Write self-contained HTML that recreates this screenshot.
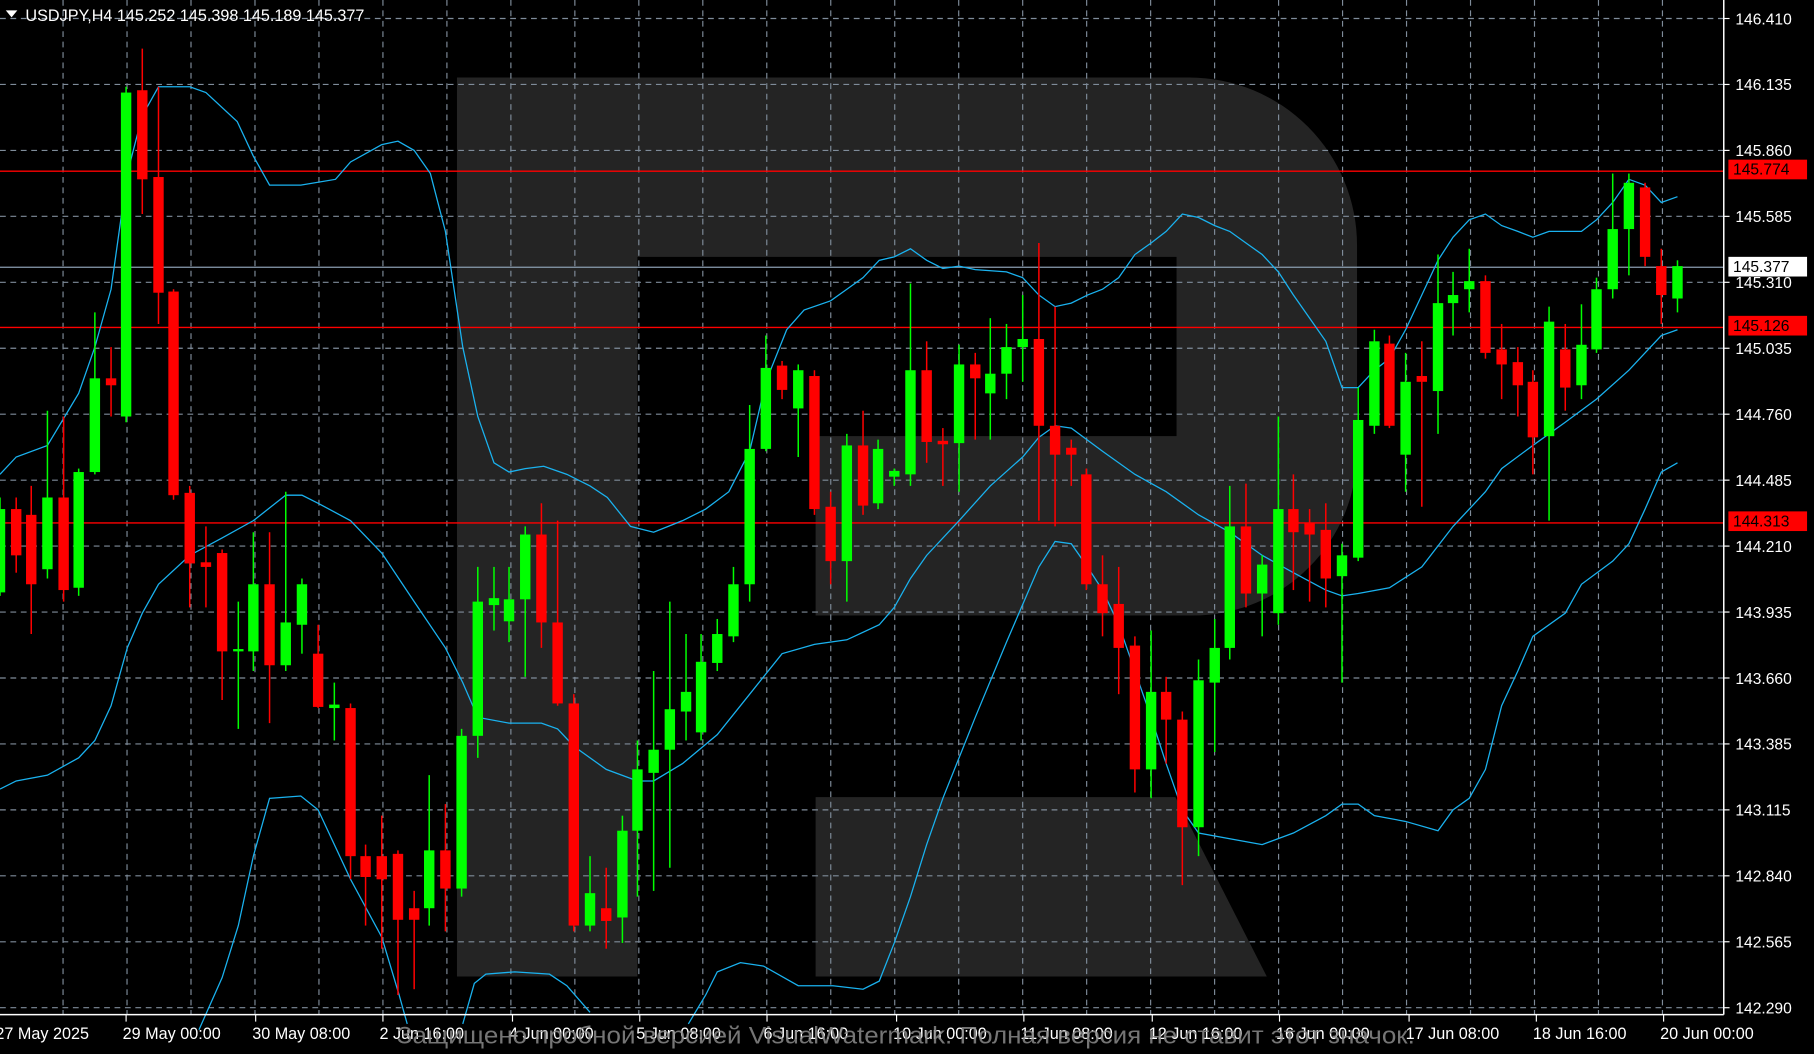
<!DOCTYPE html>
<html><head><meta charset="utf-8"><style>
html,body{margin:0;padding:0;background:#000;overflow:hidden}
svg{display:block}
text{font-family:"Liberation Sans","DejaVu Sans",sans-serif}
</style></head><body>
<svg id="s" width="1814" height="1054" viewBox="0 0 1568 911" preserveAspectRatio="none" xmlns="http://www.w3.org/2000/svg">
<rect width="1568" height="911" fill="#000"/>
<path d="M395 67 H1028 A145 145 0 0 1 1173 212 V390 A142 142 0 0 1 1031 532 H705 V377 H1017 V222 H551 V844 H395 Z" fill="#242424"/>
<path d="M705 689 H1016 L1095 844 H705 Z" fill="#242424"/>
<g id="grid" stroke="#7f8c9a" stroke-width="1" stroke-dasharray="5,4"></g>
<line x1="0" y1="148" x2="1490" y2="148" stroke="#ff0000" stroke-width="1.2"/>
<line x1="0" y1="283" x2="1490" y2="283" stroke="#ff0000" stroke-width="1.2"/>
<line x1="0" y1="452" x2="1490" y2="452" stroke="#ff0000" stroke-width="1.2"/>
<line x1="0" y1="231" x2="1490" y2="231" stroke="#8a9db0" stroke-width="1"/>
<g id="bands" fill="none" stroke="#1ab2ef" stroke-width="1.1"></g>
<g id="candles"></g>
<line x1="1490" y1="0" x2="1490" y2="877" stroke="#fff" stroke-width="1.3"/>
<line x1="0" y1="877" x2="1490" y2="877" stroke="#fff" stroke-width="1.3"/>
<g id="axis" fill="#fff" font-size="13.5"></g>
<rect x="1494" y="138" width="68" height="17" fill="#ff0000"/>
<text x="1498" y="151" font-size="13.5" fill="#000">145.774</text>
<rect x="1494" y="222" width="68" height="17" fill="#fff"/>
<text x="1498" y="235" font-size="13.5" fill="#000">145.377</text>
<rect x="1494" y="273" width="68" height="17" fill="#ff0000"/>
<text x="1498" y="286" font-size="13.5" fill="#000">145.126</text>
<rect x="1494" y="442" width="68" height="17" fill="#ff0000"/>
<text x="1498" y="455" font-size="13.5" fill="#000">144.313</text>
<path d="M5 9 L15 9 L10 15 Z" fill="#fff"/>
<text x="22" y="18" font-size="14" fill="#fff">USDJPY,H4  145.252 145.398 145.189 145.377</text>
<g id="dates" fill="#fff" font-size="14"></g>
<text x="343" y="902" font-size="21" fill="#8a8a8a" fill-opacity="0.85" textLength="880" lengthAdjust="spacingAndGlyphs">Защищено пробной версией VisualWatermark. Полная версия не ставит этот значок.</text>
</svg>
<script>
var NS="http://www.w3.org/2000/svg";
function el(p,t,a){var e=document.createElementNS(NS,t);for(var k in a)e.setAttribute(k,a[k]);document.getElementById(p).appendChild(e);return e;}
var prices=["146.410","146.135","145.860","145.585","145.310","145.035","144.760","144.485","144.210","143.935","143.660","143.385","143.115","142.840","142.565","142.290"];
for(var k=0;k<16;k++){var y=16+57*k;el("grid","line",{x1:0,y1:y,x2:1490,y2:y});el("axis","line",{x1:1490,y1:y,x2:1495,y2:y,stroke:"#fff"});var t=el("axis","text",{x:1500,y:y+5});t.textContent=prices[k];}
for(var k=0;k<27;k++){var x=54.5+55.3*k;if(x>1490)break;el("grid","line",{x1:x,y1:0,x2:x,y2:877});}
var dl=[["27 May 2025",-4],["29 May 00:00",106],["30 May 08:00",218],["2 Jun 16:00",328],["4 Jun 00:00",440],["5 Jun 08:00",550],["6 Jun 16:00",660],["10 Jun 00:00",772],["11 Jun 08:00",882],["12 Jun 16:00",993],["16 Jun 00:00",1103],["17 Jun 08:00",1215],["18 Jun 16:00",1325],["20 Jun 00:00",1435]];
dl.forEach(function(d){var t=el("dates","text",{x:d[1],y:898});t.textContent=d[0];el("dates","line",{x1:d[1]+3,y1:877,x2:d[1]+3,y2:883,stroke:"#fff"});});
var C=[[0,"g",440,512,430,515],[14,"r",440,480,430,495],[27,"r",445,505,420,548],[41,"g",430,492,355,500],[55,"r",430,510,360,520],[68,"g",408,508,405,515],[82,"g",327,408,270,410],[96,"r",327,333,300,360],[109,"g",80,360,75,365],[123,"r",78,155,42,185],[137,"r",153,253,75,280],[150,"r",252,428,250,432],[164,"r",426,487,420,525],[178,"r",486,490,455,525],[192,"r",478,563,475,605],[206,"g",561,563,520,630],[219,"g",505,563,460,580],[233,"r",505,575,460,625],[247,"g",538,575,425,580],[261,"g",505,540,500,565],[275,"r",565,611,540,612],[289,"g",609,612,590,640],[303,"r",612,740,608,760],[316,"r",740,758,730,800],[330,"r",740,760,705,820],[344,"r",738,795,735,860],[358,"r",785,795,770,855],[371,"g",735,785,670,800],[385,"r",735,768,695,805],[399,"g",636,768,630,775],[413,"g",520,636,490,655],[427,"g",517,523,490,545],[440,"g",518,537,490,555],[454,"g",462,518,455,585],[468,"r",462,538,435,560],[482,"r",538,608,450,610],[496,"r",608,800,600,805],[510,"g",772,800,740,805],[524,"r",785,796,750,820],[538,"g",718,793,705,815],[551,"g",665,718,640,775],[565,"g",648,668,580,770],[579,"g",613,648,520,750],[593,"g",598,615,548,640],[606,"g",572,633,548,640],[620,"g",548,573,535,580],[634,"g",505,550,490,555],[648,"g",388,505,350,520],[662,"g",318,388,290,390],[676,"r",316,337,312,345],[690,"g",320,353,315,395],[704,"r",325,440,320,445],[718,"r",438,485,425,505],[732,"g",385,485,375,520],[746,"r",385,437,355,445],[759,"g",388,435,380,440],[773,"g",407,412,405,420],[787,"g",320,410,245,420],[801,"r",320,382,295,400],[815,"r",381,384,370,420],[829,"g",315,383,298,425],[843,"r",315,327,305,380],[856,"g",323,340,275,380],[870,"g",300,323,280,345],[884,"g",293,300,255,330],[898,"r",293,368,210,450],[912,"r",368,393,265,455],[926,"r",387,393,380,420],[939,"r",410,505,405,510],[953,"r",505,530,480,550],[967,"r",522,560,490,600],[981,"r",558,665,550,685],[995,"g",598,665,545,690],[1008,"r",598,622,585,660],[1022,"r",622,715,615,765],[1036,"g",588,715,570,740],[1050,"g",560,590,535,650],[1063,"g",455,560,420,570],[1077,"r",455,513,418,525],[1091,"g",488,513,480,550],[1105,"g",440,530,360,540],[1118,"r",440,460,410,510],[1132,"r",452,462,440,520],[1146,"r",458,500,435,525],[1160,"g",480,498,470,590],[1174,"g",363,482,335,485],[1188,"g",295,368,285,375],[1201,"r",297,368,290,370],[1215,"g",330,393,305,425],[1229,"r",325,330,295,438],[1243,"g",262,338,220,375],[1256,"g",255,262,235,290],[1270,"g",243,250,215,270],[1284,"r",243,305,238,310],[1298,"r",302,315,280,345],[1312,"r",313,333,300,360],[1325,"r",330,378,320,410],[1339,"g",278,377,265,450],[1353,"r",302,335,280,355],[1367,"g",298,333,263,345],[1380,"g",250,302,240,305],[1394,"g",198,250,150,258],[1408,"g",158,198,150,238],[1422,"r",162,222,158,230],[1436,"r",230,255,215,280],[1450,"g",230,258,225,270]];
C.forEach(function(c){var col=c[1]=="g"?"#00ff00":"#ff0000";el("candles","line",{x1:c[0],y1:c[4],x2:c[0],y2:c[5],stroke:col,"stroke-width":1.3});el("candles","rect",{x:c[0]-4.5,y:c[2],width:9,height:Math.max(2,c[3]-c[2]),fill:col});});
var U="0,410 14,395 41,385 68,340 82,300 96,250 110,150 123,100 137,75 164,75 178,80 205,105 219,135 233,160 260,160 290,155 303,140 330,125 344,122 358,130 372,150 385,200 400,300 413,360 427,400 440,408 454,405 470,403 490,410 510,420 525,430 545,455 565,460 590,450 610,440 630,425 648,390 662,330 680,285 695,268 718,260 732,250 746,240 760,225 773,222 787,215 801,225 815,232 829,230 843,233 870,235 884,240 898,255 912,265 926,262 940,255 953,250 967,240 981,220 995,210 1008,200 1022,185 1036,188 1050,195 1063,200 1077,210 1091,220 1105,235 1118,255 1132,275 1146,295 1160,335 1174,335 1188,320 1201,310 1215,285 1229,255 1243,225 1256,205 1270,190 1284,185 1298,195 1312,200 1325,205 1339,200 1367,200 1380,190 1394,175 1408,155 1422,160 1436,175 1450,170";
var M="0,682 14,675 41,670 68,655 82,640 96,610 110,560 123,530 137,505 164,480 192,465 219,450 247,428 261,428 275,435 303,450 330,478 358,520 385,560 400,590 413,620 440,625 468,625 482,630 496,645 524,665 551,675 565,675 590,660 620,635 648,600 676,565 704,557 732,553 760,540 773,525 787,500 801,480 829,450 856,420 884,395 898,378 912,368 926,370 953,390 981,410 1008,425 1036,445 1063,460 1091,480 1118,495 1146,510 1160,515 1174,513 1201,508 1229,490 1256,455 1284,425 1298,405 1325,385 1353,365 1380,345 1408,320 1436,290 1450,285";
var L1="172,890 192,845 206,800 219,740 233,690 260,688 275,700 303,760 330,810 345,860 352,885";
var L2="400,885 410,850 420,842 445,840 475,842 490,852 510,875";
var L3="595,885 610,860 620,840 640,832 660,835 690,852 720,852 746,855 760,848 773,815 787,775 801,730 815,690 843,620 870,555 898,490 912,468 926,470 940,490 953,510 967,540 981,580 995,620 1008,660 1022,700 1036,720 1063,725 1091,730 1118,720 1146,705 1160,695 1174,695 1188,705 1215,710 1243,718 1256,700 1270,690 1284,665 1298,610 1312,580 1325,550 1353,530 1367,505 1394,485 1408,470 1422,440 1436,408 1450,400";
[U,M,L1,L2,L3].forEach(function(p){el("bands","polyline",{points:p});});
</script>
</body></html>
